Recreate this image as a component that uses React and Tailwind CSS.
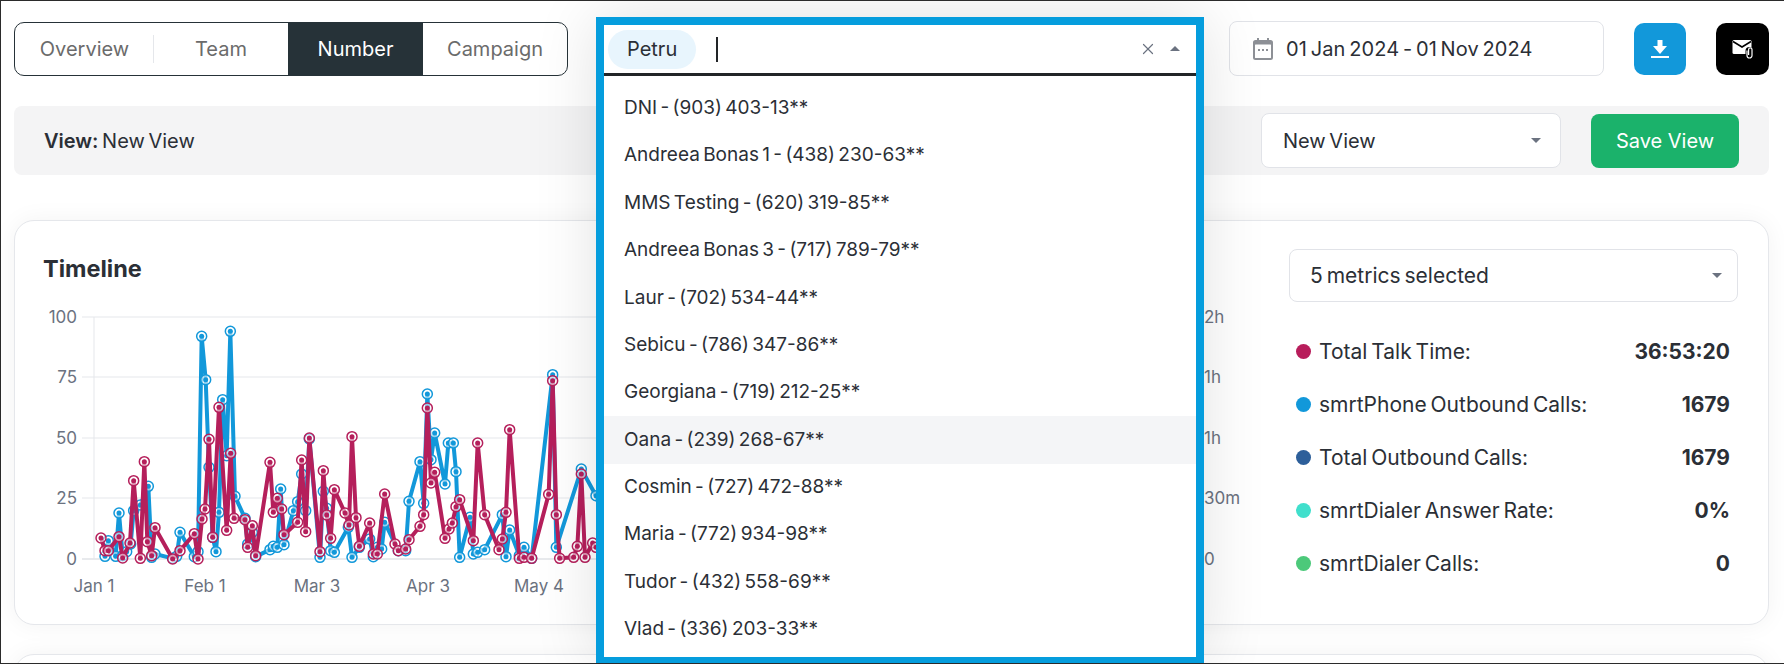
import { X } from 'lucide-react';

const font = "font-['Inter','Liberation_Sans',sans-serif]";

const numbers = [
  'DNI - (903) 403-13**',
  'Andreea Bonas 1 - (438) 230-63**',
  'MMS Testing - (620) 319-85**',
  'Andreea Bonas 3 - (717) 789-79**',
  'Laur - (702) 534-44**',
  'Sebicu - (786) 347-86**',
  'Georgiana - (719) 212-25**',
  'Oana - (239) 268-67**',
  'Cosmin - (727) 472-88**',
  'Maria - (772) 934-98**',
  'Tudor - (432) 558-69**',
  'Vlad - (336) 203-33**',
];

const metrics = [
  { label: 'Total Talk Time:', value: '36:53:20', dot: 'bg-[#b81d5b]' },
  { label: 'smrtPhone Outbound Calls:', value: '1679', dot: 'bg-[#1298da]' },
  { label: 'Total Outbound Calls:', value: '1679', dot: 'bg-[#2d5f9a]' },
  { label: 'smrtDialer Answer Rate:', value: '0%', dot: 'bg-[#40dfcc]' },
  { label: 'smrtDialer Calls:', value: '0', dot: 'bg-[#4cc97a]' },
];

// traced from the reference, x/3 and (y-240)*3 in page pixels
const bluePts = [
  [315,952],[325,905],[347,952],[357,822],[368,950],[380,938],[392,915],[401,815],[421,798],[445,742],[455,955],[465,945],[518,958],[530,952],[540,880],[583,953],[594,938],[605,292],[617,422],[627,685],[638,895],[648,938],[657,820],[668,482],[680,650],[691,277],[705,772],[735,838],[743,915],[757,880],[767,953],[810,932],[820,922],[832,925],[842,750],[852,917],[880,815],[893,788],[905,705],[917,815],[928,600],[960,955],[970,757],[980,808],[992,935],[1003,940],[1045,865],[1056,955],[1078,925],[1109,900],[1120,953],[1132,925],[1145,930],[1154,850],[1195,935],[1217,935],[1227,787],[1260,668],[1271,793],[1282,465],[1293,662],[1304,582],[1335,735],[1345,612],[1360,612],[1368,698],[1379,955],[1410,835],[1420,945],[1433,940],[1454,932],[1507,827],[1518,953],[1529,873],[1558,950],[1572,925],[1595,958],[1658,407],[1669,925],[1744,690],[1788,770],[1830,900],
];

const redPts = [
  [303,897],[315,935],[325,935],[357,893],[368,957],[390,912],[401,725],[421,958],[433,668],[442,908],[455,950],[465,866],[518,960],[540,935],[583,884],[594,960],[606,840],[615,810],[627,601],[638,895],[657,505],[680,874],[692,643],[702,838],[735,842],[743,925],[757,860],[767,950],[810,670],[820,820],[832,778],[845,810],[852,887],[893,850],[905,663],[917,878],[928,597],[960,938],[970,695],[980,828],[992,898],[1003,752],[1035,822],[1047,858],[1056,593],[1068,836],[1078,922],[1109,852],[1120,945],[1132,945],[1154,765],[1185,915],[1195,935],[1217,930],[1227,902],[1260,862],[1271,827],[1282,507],[1293,732],[1304,700],[1335,898],[1347,870],[1357,852],[1368,803],[1379,782],[1420,905],[1433,612],[1454,827],[1497,932],[1507,900],[1518,820],[1529,572],[1558,958],[1572,955],[1595,958],[1646,766],[1658,425],[1669,827],[1679,958],[1721,955],[1732,922],[1744,705],[1755,955],[1778,912],[1788,925],[1830,950],
];

const toPage = (pts) => pts.map(([x, y]) => [x / 3, 240 + y / 3]);

const gridYs = [318, 378, 439, 499, 560];
const leftLabels = ['100', '75', '50', '25', '0'];
const rightLabels = ['2h', '1h', '1h', '30m', '0'];
const xLabels = [['Jan 1', 94], ['Feb 1', 205], ['Mar 3', 317], ['Apr 3', 428], ['May 4', 539]];

const Series = ({ pts, color }) => {
  const page = toPage(pts);
  return (
    <g>
      <polyline points={page.map((p) => p.join(',')).join(' ')} fill="none" stroke={color} strokeWidth="4" strokeLinejoin="round" />
      {page.map(([x, y], i) => (
        <g key={i}>
          <circle cx={x} cy={y} r="5" fill="#fff" fillOpacity="0.55" stroke={color} strokeWidth="1.5" />
          <circle cx={x} cy={y} r="2.5" fill={color} />
        </g>
      ))}
    </g>
  );
};

const Chart = () => (
  <svg viewBox="44 290 1201 320" className="block w-[1201px] h-[320px] [word-spacing:0]">
    {gridYs.map((y, i) => (
      <g key={y}>
        <line x1="82" x2="1204" y1={y} y2={y} stroke={i === 4 ? '#d1d5db' : '#e5e7eb'} strokeWidth="1" />
        <text x="77" y={y + 6} textAnchor="end" fontSize="17" fill="#6b7280" fontFamily="Inter">{leftLabels[i]}</text>
        <text x="1204" y={y + 6} fontSize="17" fill="#6b7280" fontFamily="Inter">{rightLabels[i]}</text>
      </g>
    ))}
    <line x1="94" x2="94" y1="318" y2="560" stroke="#e5e7eb" />
    {xLabels.map(([t, x]) => (
      <text key={t} x={x} y="593" textAnchor="middle" fontSize="17" fill="#6b7280" fontFamily="Inter">{t}</text>
    ))}
    <Series pts={bluePts} color="#1298da" />
    <Series pts={redPts} color="#b51f5b" />
  </svg>
);

const Caret = ({ up = false }) => (
  <svg width="10" height="5" viewBox="0 0 10 5" className="shrink-0">
    <path d={up ? 'M5 0 L10 5 L0 5 Z' : 'M0 0 L10 0 L5 5 Z'} fill="#6b7280" />
  </svg>
);

const NumberSelect = () => (
  <div className="relative w-[608px] h-[55px] shrink-0">
    {/* open dropdown sits over the page */}
    <div className="absolute left-0 top-[-4px] w-[608px] h-[648px] border-8 border-[#059ddd] bg-white z-10 shadow-[0_0_60px_rgba(0,0,0,0.12)] overflow-hidden">
      <div className="h-[51px] flex items-center pl-1 pr-[16px] border-b-[3px] border-[#222528]">
        <span className="h-[39px] px-[19px] flex items-center rounded-full bg-[#e8f5fd] text-[20px] text-[#2b2f36]">Petru</span>
        <span className="ml-[20px] w-[2px] h-[25px] bg-[#222528]" />
        <X className="ml-auto w-[18px] h-[18px] text-[#6b7280]" strokeWidth={1.6} />
        <span className="ml-[13px] -mt-[2px]"><Caret up /></span>
      </div>
      <div className="pt-[8.5px]">
        {numbers.map((n) => (
          <div key={n} className={`h-[47.4px] flex items-center px-5 text-[19px] text-[#2b2f36] ${n.startsWith('Oana') ? 'bg-[#f4f5f7]' : ''}`}>
            {n}
          </div>
        ))}
      </div>
    </div>
  </div>
);

const tabBase = 'h-full flex items-center justify-center text-[20px]';

export default function App() {
  return (
    <div className={`relative w-[1784px] h-[664px] overflow-hidden bg-white border-t border-b border-l border-[#2b2b2b] pl-[13px] pr-[15px] pt-[20px] [word-spacing:-2px] ${font}`}>
      <div className="flex items-center h-[55px]">
        <div className="flex h-[54px] w-[554px] shrink-0 rounded-[10px] border border-[#263238] overflow-hidden text-[#6b6b6b]">
          <div className={`${tabBase} w-[139px] relative`}>
            Overview
            <span className="absolute right-0 top-[12px] bottom-[12px] w-px bg-[#e5e7eb]" />
          </div>
          <div className={`${tabBase} w-[134px]`}>Team</div>
          <div className={`${tabBase} w-[135px] bg-[#263238] text-white`}>Number</div>
          <div className={`${tabBase} flex-1`}>Campaign</div>
        </div>

        <div className="ml-[28px]"><NumberSelect /></div>

        <div className="ml-[25px] w-[375px] h-[55px] shrink-0 flex items-center rounded-[8px] border border-[#e1e3e8] pl-[23px] text-[20px] text-[#2b2f36]">
          <svg width="20" height="22" viewBox="0 0 20 22" className="shrink-0">
            <path d="M4 0h2v2h8V0h2v2h1.500A2.500 2.500 0 0 1 20 4.500v15a2.500 2.500 0 0 1-2.500 2.500h-15A2.500 2.500 0 0 1 0 19.500v-15A2.500 2.500 0 0 1 2.500 2H4z" fill="#8d9096" />
            <rect x="2" y="6.500" width="16" height="13.500" rx="0.500" fill="#fff" />
            <rect x="5" y="11" width="2" height="2" fill="#8d9096" />
            <rect x="9" y="11" width="2" height="2" fill="#8d9096" />
            <rect x="13" y="11" width="2" height="2" fill="#8d9096" />
          </svg>
          <span className="ml-[13px] tracking-[0.1px]">01 Jan 2024 - 01 Nov 2024</span>
        </div>

        <button className="ml-[30px] w-[52px] h-[52px] shrink-0 rounded-[10px] bg-[#1298da] flex items-center justify-center">
          <svg width="24" height="24" viewBox="0 0 24 24" fill="#fff">
            <path d="M9.500 3h5v6H19l-7 8-7-8h4.500z" />
            <rect x="3" y="19" width="18" height="2" />
          </svg>
        </button>
        <button className="ml-[30px] w-[53px] h-[52px] shrink-0 rounded-[10px] bg-black flex items-center justify-center">
          <svg width="24" height="24" viewBox="0 0 24 24">
            <rect x="1.500" y="3" width="19" height="14" rx="1.500" fill="#fff" />
            <path d="M2 4.500l9 5.500 9-5.500" fill="none" stroke="#000" strokeWidth="1.500" />
            <rect x="14.500" y="10" width="8" height="12" rx="4" fill="#000" />
            <path d="M16 13.500v5a2.500 2.500 0 0 0 5 0v-6a1.700 1.700 0 0 0-3.400 0v5.500" fill="none" stroke="#fff" strokeWidth="1.200" />
          </svg>
        </button>
      </div>

      <div className="mt-[30px] h-[69px] rounded-[8px] bg-[#f4f4f5] flex items-center pl-[30px] pr-[30px] text-[20px] text-[#2b2f36]">
        <span><b className="font-semibold">View:</b> New View</span>
        <div className="ml-auto w-[300px] h-[55px] rounded-[8px] border border-[#e1e3e8] bg-white flex items-center justify-between pl-[21px] pr-[19px]">
          New View
          <Caret />
        </div>
        <button className="ml-[30px] w-[148px] h-[54px] rounded-[8px] bg-[#1bb26b] text-white">Save View</button>
      </div>

      <div className="mt-[45px] h-[405px] rounded-[20px] border border-[#e5e7eb] bg-white shadow-[0_0_24px_rgba(0,0,0,0.05)] flex pl-[29px] pr-[30px] pt-[28px]">
        <div className="w-[1201px] shrink-0">
          <h2 className="h-[40px] flex items-center text-[23.500px] font-bold text-[#2b2f36] -ml-px">Timeline</h2>
          <Chart />
        </div>
        <div className="ml-[44px] flex-1">
          <div className="h-[53px] rounded-[8px] border border-[#e1e3e8] flex items-center justify-between pl-[20px] pr-[15px] text-[21px] text-[#2b2f36]">
            5 metrics selected
            <Caret />
          </div>
          <div className="mt-[23px]">
            {metrics.map((m) => (
              <div key={m.label} className="h-[53px] flex items-center pl-[7px] pr-[8px] text-[21px] text-[#2b2f36]">
                <span className={`w-[15px] h-[15px] rounded-full ${m.dot}`} />
                <span className="ml-2">{m.label}</span>
                <span className="ml-auto font-bold">{m.value}</span>
              </div>
            ))}
          </div>
        </div>
      </div>

      <div className="mt-[29px] h-[100px] rounded-[20px] border border-[#e5e7eb] bg-white shadow-[0_0_24px_rgba(0,0,0,0.05)]" />
    </div>
  );
}
